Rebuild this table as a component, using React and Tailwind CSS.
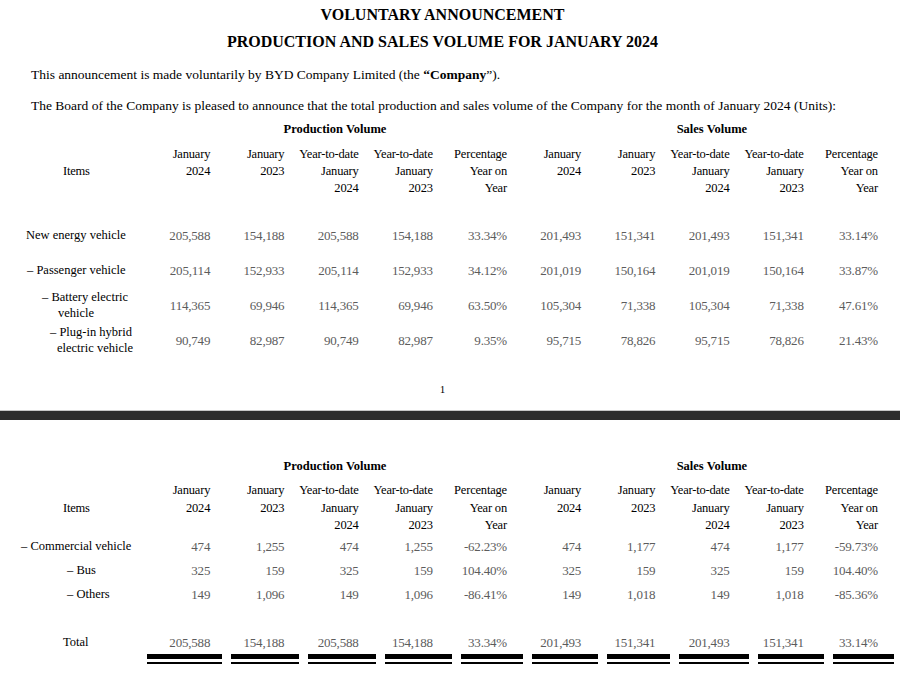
import React from "react";

const cols = "grid grid-cols-[136px_repeat(10,74.2px)]";

const headerCols = [
  ["January", "2024"],
  ["January", "2023"],
  ["Year-to-date", "January", "2024"],
  ["Year-to-date", "January", "2023"],
  ["Percentage", "Year on", "Year"],
  ["January", "2024"],
  ["January", "2023"],
  ["Year-to-date", "January", "2024"],
  ["Year-to-date", "January", "2023"],
  ["Percentage", "Year on", "Year"],
];

function GroupHeader() {
  return (
    <div className={`${cols} h-[16px] leading-[16px] text-[12.5px] font-bold`}>
      <div />
      <div className="col-span-5 text-center pl-[27px]">Production Volume</div>
      <div className="col-span-5 text-center pl-[39px]">Sales Volume</div>
    </div>
  );
}

function ColHeaders({ lh }) {
  return (
    <div className={`${cols} text-[12.5px] tracking-[-0.2px] ${lh}`}>
      <div className="flex items-center pl-[63px]">Items</div>
      {headerCols.map((c, i) => (
        <div key={i} className="text-right">
          {c.map((l, j) => (
            <div key={j}>{l}</div>
          ))}
        </div>
      ))}
    </div>
  );
}

function Row({ label, values, h }) {
  return (
    <div className={`${cols} ${h} items-center`}>
      <div className="text-[12.5px] leading-[15.5px]">{label}</div>
      {values.map((v, i) => (
        <div key={i} className="text-right text-[13px] text-[#5c5c5c] tracking-[-0.2px]">
          {v}
        </div>
      ))}
    </div>
  );
}

function DoubleLines() {
  return (
    <div className="flex pl-[147px] gap-[9px]">
      {[75, 68, 68, 67, 62, 66, 63, 70, 66, 61].map((w, i) => (
        <div key={i} className="flex flex-col" style={{ width: w }}>
          <div className="h-[5px] bg-black" />
          <div className="h-[3px]" />
          <div className="h-[2px] bg-black" />
        </div>
      ))}
    </div>
  );
}

export default function App() {
  return (
    <div
      className="w-[900px] h-[678px] bg-white overflow-hidden text-black"
      style={{ fontFamily: '"Liberation Serif", "Times New Roman", serif' }}
    >
      <div className="w-[885px] text-center font-bold text-[16px] leading-[18px] pt-[6px]">
        VOLUNTARY ANNOUNCEMENT
      </div>
      <div className="w-[885px] text-center font-bold text-[16px] leading-[18px] mt-[9px]">
        PRODUCTION AND SALES VOLUME FOR JANUARY 2024
      </div>
      <div className="pl-[31px] text-[13.5px] leading-[16px] mt-[16px]">
        This announcement is made voluntarily by BYD Company Limited (the <b>“Company</b>”).
      </div>
      <div className="pl-[31px] text-[13.5px] leading-[16px] mt-[15px]">
        The Board of the Company is pleased to announce that the total production and sales volume of the Company for the month of January 2024 (Units):
      </div>
      <div className="mt-[7px]">
        <GroupHeader />
      </div>
      <div className="mt-[9px]">
        <ColHeaders lh="leading-[17px]" />
      </div>
      <div className="mt-[21px]">
        <Row
          h="h-[35px]"
          label={<div className="pl-[26px]">New energy vehicle</div>}
          values={["205,588", "154,188", "205,588", "154,188", "33.34%", "201,493", "151,341", "201,493", "151,341", "33.14%"]}
        />
        <Row
          h="h-[35px]"
          label={<div className="pl-[27px]">– Passenger vehicle</div>}
          values={["205,114", "152,933", "205,114", "152,933", "34.12%", "201,019", "150,164", "201,019", "150,164", "33.87%"]}
        />
        <Row
          h="h-[35px]"
          label={
            <div>
              <div className="pl-[42px]">– Battery electric</div>
              <div className="pl-[58px]">vehicle</div>
            </div>
          }
          values={["114,365", "69,946", "114,365", "69,946", "63.50%", "105,304", "71,338", "105,304", "71,338", "47.61%"]}
        />
        <Row
          h="h-[35px]"
          label={
            <div>
              <div className="pl-[50px]">– Plug-in hybrid</div>
              <div className="pl-[57px]">electric vehicle</div>
            </div>
          }
          values={["90,749", "82,987", "90,749", "82,987", "9.35%", "95,715", "78,826", "95,715", "78,826", "21.43%"]}
        />
      </div>
      <div className="w-[885px] text-center text-[11px] leading-[14px] mt-[24px]">1</div>
      <div className="mt-[14px] h-[10px] bg-[#2e2e2e] border-t border-[#c8c8c8]" />

      <div className="mt-[38px]">
        <GroupHeader />
      </div>
      <div className="mt-[8px]">
        <ColHeaders lh="leading-[17.5px]" />
      </div>
      <Row
        h="h-[24px]"
        label={<div className="pl-[21px]">– Commercial vehicle</div>}
        values={["474", "1,255", "474", "1,255", "-62.23%", "474", "1,177", "474", "1,177", "-59.73%"]}
      />
      <Row
        h="h-[24px]"
        label={<div className="pl-[67px]">– Bus</div>}
        values={["325", "159", "325", "159", "104.40%", "325", "159", "325", "159", "104.40%"]}
      />
      <Row
        h="h-[24px]"
        label={<div className="pl-[67px]">– Others</div>}
        values={["149", "1,096", "149", "1,096", "-86.41%", "149", "1,018", "149", "1,018", "-85.36%"]}
      />
      <div className="mt-[26px]">
        <Row
          h="h-[20px]"
          label={<div className="pl-[63px]">Total</div>}
          values={["205,588", "154,188", "205,588", "154,188", "33.34%", "201,493", "151,341", "201,493", "151,341", "33.14%"]}
        />
      </div>
      <div className="mt-[1px]">
        <DoubleLines />
      </div>
    </div>
  );
}
